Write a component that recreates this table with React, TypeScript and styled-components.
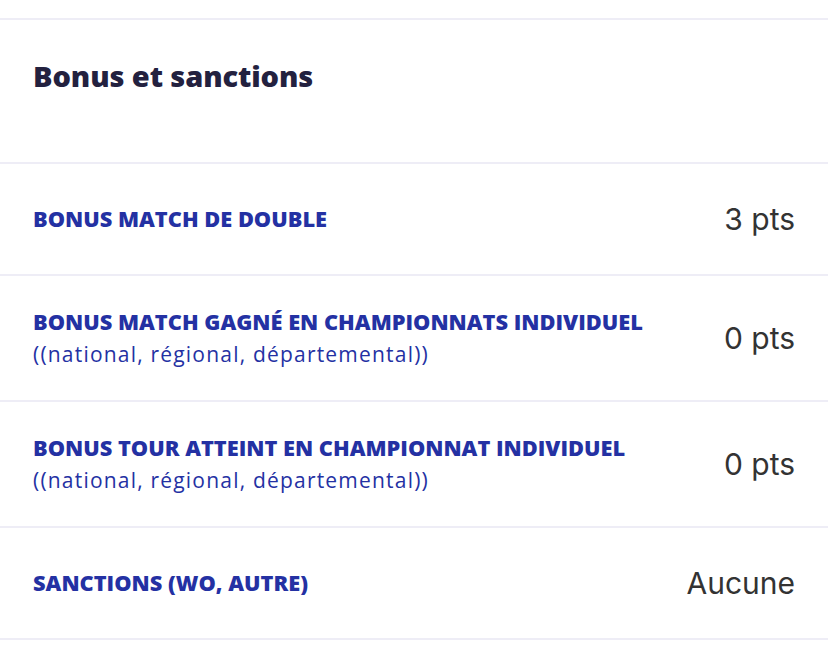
import { createGlobalStyle } from "styled-components";
import styled from "styled-components";

const GlobalStyle = createGlobalStyle`
  html, body {
    margin: 0;
    padding: 0;
    background: #ffffff;
  }
  body {
    font-family: "Open Sans", "Lato", sans-serif;
  }
`

const Page = styled.div`
  padding-top: 18px;
  width: 828px;
`

const Section = styled.section`
  border-top: 2px solid #eeedf6;
`

const Header = styled.div`
  height: 144px;
  box-sizing: border-box;
  padding: 36px 33px 0;
  border-bottom: 2px solid #eeedf6;
`

const Title = styled.h2`
  margin: 0;
  font-family: "Open Sans", sans-serif;
  font-weight: 800;
  font-size: 29px;
  line-height: 40px;
  letter-spacing: -0.1px;
  color: #23213f;
`

const Row = styled.div<{ $tall?: boolean }>`
  display: flex;
  align-items: center;
  justify-content: space-between;
  box-sizing: border-box;
  min-height: ${({ $tall }) => ($tall ? "126px" : "112px")};
  padding: 0 33px;
  border-bottom: 2px solid #eeedf6;
`

const Label = styled.div`
  display: flex;
  flex-direction: column;
`

const LabelTitle = styled.span`
  font-family: "Open Sans", sans-serif;
  font-weight: 800;
  font-size: 21.8px;
  line-height: 32px;
  text-transform: uppercase;
  color: #2431a3;
`

const LabelHint = styled.span`
  font-family: "Open Sans", sans-serif;
  font-weight: 400;
  font-size: 21px;
  line-height: 32px;
  letter-spacing: 1.2px;
  color: #2431a3;
`

const Value = styled.span`
  font-family: "Inter", sans-serif;
  font-size: 30px;
  color: #333333;
  white-space: nowrap;
`

type Item = {
  label: string
  hint?: string
  value: string
}

const items: Item[] = [
  { label: "Bonus match de double", value: "3 pts" },
  {
    label: "Bonus match gagné en championnats individuel",
    hint: "((national, régional, départemental))",
    value: "0 pts",
  },
  {
    label: "Bonus tour atteint en championnat individuel",
    hint: "((national, régional, départemental))",
    value: "0 pts",
  },
  { label: "Sanctions (WO, autre)", value: "Aucune" },
]

const App = () => {
  return (
    <Page>
      <GlobalStyle />
      <Section>
        <Header>
          <Title>Bonus et sanctions</Title>
        </Header>
        {items.map((item) => (
          <Row key={item.label} $tall={!!item.hint}>
            <Label>
              <LabelTitle>{item.label}</LabelTitle>
              {item.hint && <LabelHint>{item.hint}</LabelHint>}
            </Label>
            <Value>{item.value}</Value>
          </Row>
        ))}
      </Section>
    </Page>
  )
}

export default App;
